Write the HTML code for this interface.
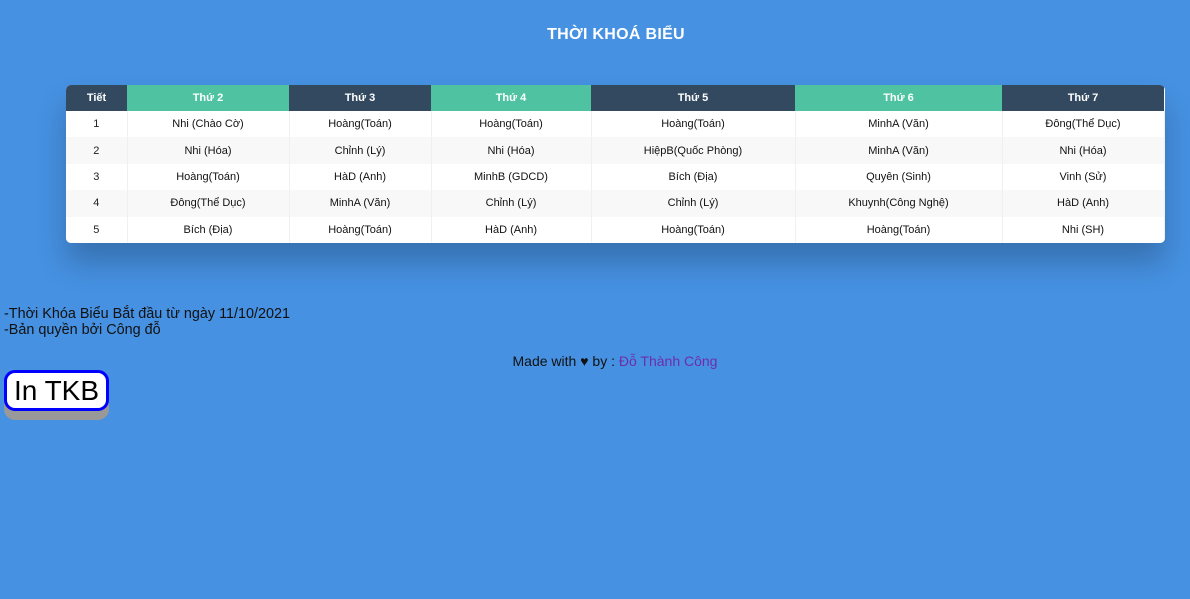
<!DOCTYPE html>
<html><head><meta charset="utf-8"><style>
body{margin:0;background:#4691e2;font-family:"Liberation Sans",Arial,sans-serif;width:1190px;height:599px;overflow:hidden;position:relative}
h2{position:absolute;top:26px;left:0;width:1232px;margin:0;text-align:center;color:#fff;font-size:16px;font-weight:bold;letter-spacing:.3px}
table{position:absolute;left:66px;top:85px;border-collapse:collapse;background:#fff;border-radius:5px;overflow:hidden;box-shadow:0 20px 30px rgba(0,0,0,.22);font-size:11px}
th{height:26px;padding:0;color:#fff;font-weight:bold;font-size:11px}
th.d{background:#324960}th.g{background:#4fc3a1}
td{height:26.4px;padding:0;text-align:center;color:#111;border-right:1px solid #f0f0f0;background:#fff}
tr:nth-child(odd) td{background:#f8f8f8}
td:first-child{color:#222}
.n{position:absolute;left:4px;top:306px;font-size:14.4px;line-height:16px;color:#111}
.m{position:absolute;top:353px;left:0;width:1230px;text-align:center;font-size:14px;color:#111}
.m span{color:#6f2da8}
.b{position:absolute;left:4px;top:370px;width:99px;height:35px;border:3px solid #0000ff;border-radius:11px;background:#fff;box-shadow:0 9px 0 #999;font-size:28px;line-height:35px;text-align:center;color:#000}
</style></head><body>
<h2>THỜI KHOÁ BIỂU</h2>
<table>
<tr><th class="d" style="width:61px">Tiết</th><th class="g" style="width:162px">Thứ 2</th><th class="d" style="width:142px">Thứ 3</th><th class="g" style="width:160px">Thứ 4</th><th class="d" style="width:204px">Thứ 5</th><th class="g" style="width:207px">Thứ 6</th><th class="d" style="width:162px">Thứ 7</th></tr>
<tr><td>1</td><td>Nhi (Chào Cờ)</td><td>Hoàng(Toán)</td><td>Hoàng(Toán)</td><td>Hoàng(Toán)</td><td>MinhA (Văn)</td><td>Đông(Thể Dục)</td></tr>
<tr><td>2</td><td>Nhi (Hóa)</td><td>Chỉnh (Lý)</td><td>Nhi (Hóa)</td><td>HiệpB(Quốc Phòng)</td><td>MinhA (Văn)</td><td>Nhi (Hóa)</td></tr>
<tr><td>3</td><td>Hoàng(Toán)</td><td>HàD (Anh)</td><td>MinhB (GDCD)</td><td>Bích (Địa)</td><td>Quyên (Sinh)</td><td>Vinh (Sử)</td></tr>
<tr><td>4</td><td>Đông(Thể Dục)</td><td>MinhA (Văn)</td><td>Chỉnh (Lý)</td><td>Chỉnh (Lý)</td><td>Khuynh(Công Nghệ)</td><td>HàD (Anh)</td></tr>
<tr><td>5</td><td>Bích (Địa)</td><td>Hoàng(Toán)</td><td>HàD (Anh)</td><td>Hoàng(Toán)</td><td>Hoàng(Toán)</td><td>Nhi (SH)</td></tr>
</table>
<div class="n">-Thời Khóa Biểu Bắt đầu từ ngày 11/10/2021<br>-Bản quyền bởi Công đỗ</div>
<div class="m">Made with ♥ by : <span>Đỗ Thành Công</span></div>
<div class="b">In TKB</div>
</body></html>
